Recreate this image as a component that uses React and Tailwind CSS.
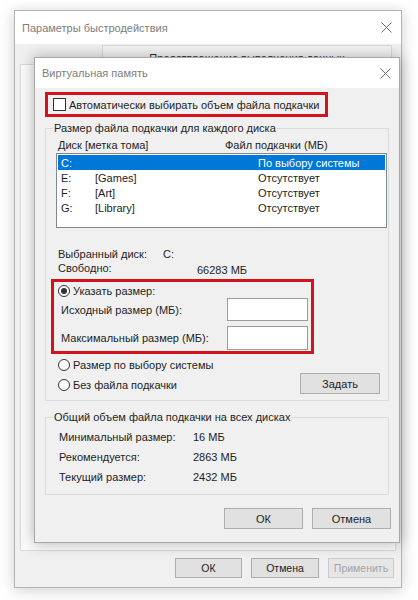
import React from 'react';

const CloseX = () => (
  <svg width="11" height="11" viewBox="0 0 11 11" className="shrink-0">
    <path d="M0.5 0.5 L10.5 10.5 M10.5 0.5 L0.5 10.5" stroke="#6e6e6e" strokeWidth="1" fill="none" />
  </svg>
)

const Btn = ({ children, className = '', disabled = false }) => (
  <div className={`flex items-center justify-center whitespace-nowrap border border-[#adadad] bg-[#e1e1e1] ${disabled ? 'text-[#a3a3a3] border-[#cccccc] bg-[#e6e6e6]' : 'text-[#1e1e1e]'} ${className}`}>
    {children}
  </div>
)

const Radio = ({ checked }) => (
  <div className="w-[12px] h-[12px] rounded-full border border-[#333333] bg-white flex items-center justify-center shrink-0">
    {checked ? <div className="w-[6px] h-[6px] rounded-full bg-[#333333]" /> : null}
  </div>
)

const drives = [
  { d: 'C:', label: '', size: 'По выбору системы', sel: true },
  { d: 'E:', label: '[Games]', size: 'Отсутствует' },
  { d: 'F:', label: '[Art]', size: 'Отсутствует' },
  { d: 'G:', label: '[Library]', size: 'Отсутствует' },
]

const totals = [
  ['Минимальный размер:', '16 МБ'],
  ['Рекомендуется:', '2863 МБ'],
  ['Текущий размер:', '2432 МБ'],
]

export default function App() {
  return (
    <div className="relative w-[418px] h-[600px] bg-white overflow-hidden font-['Liberation_Sans',Arial,sans-serif] text-[11px] leading-[16px] text-[#1e1e1e] whitespace-nowrap">

      {/* окно "Параметры быстродействия" */}
      <div className="absolute left-[14px] top-[10px] w-[388px] h-[578px] border border-[#b4b4b4] bg-[#f0f0f0] shadow-[0_2px_14px_rgba(0,0,0,0.2)] flex flex-col">
        <div className="h-[33px] bg-white flex items-center justify-between pl-[7px] pr-[9px] shrink-0">
          <span className="text-[11px] text-[#7d7d7d]">Параметры быстродействия</span>
          <CloseX />
        </div>
        <div className="flex flex-col px-[5px]">
          <div className="h-[19px] mt-[1px] flex">
            <div className="ml-[82px] w-[290px] border-t border-l border-r border-[#d9d9d9] bg-[#f4f4f4] flex justify-center pt-[4px]">
              <span className="text-[#333333]">Предотвращение выполнения данных</span>
            </div>
          </div>
          <div className="h-[487px] border border-[#d9d9d9] bg-[#fbfbfb]" />
          <div className="mt-[7px] flex justify-end gap-[9px] mr-[2px] text-[10.5px]">
            <Btn className="w-[67px] h-[20px]">ОК</Btn>
            <Btn className="w-[68px] h-[20px]">Отмена</Btn>
            <Btn className="w-[66px] h-[20px]" disabled>Применить</Btn>
          </div>
        </div>
      </div>

      {/* окно "Виртуальная память" */}
      <div className="absolute left-[34px] top-[57px] w-[366px] h-[486px] border border-[#a8a8a8] bg-[#f0f0f0] shadow-[0_0_14px_rgba(0,0,0,0.3)] flex flex-col">
        <div className="h-[30px] bg-white flex items-center justify-between pl-[7px] pr-[8px] shrink-0">
          <span className="text-[11px] text-[#7d7d7d]">Виртуальная память</span>
          <CloseX />
        </div>

        <div className="flex flex-col px-[10px]">
          <div className="mt-[4px] h-[25px] w-[283px] border-[3px] border-[#d2131d] flex items-center pl-[5px] gap-[3px]">
            <div className="w-[13px] h-[13px] border border-[#333333] bg-white shrink-0" />
            <span>Автоматически выбирать объем файла подкачки</span>
          </div>

          <fieldset className="mt-[3px] border border-[#dcdcdc] pl-[5px] pb-[5px]">
            <legend className="ml-[2px] px-[1px] leading-[16px]">Размер файла подкачки для каждого диска</legend>
            <div className="flex h-[16px] mt-[1px] items-center">
              <span className="ml-[7px] w-[167px] shrink-0">Диск [метка тома]</span>
              <span>Файл подкачки (МБ)</span>
            </div>
            <div className="ml-[5px] w-[331px] h-[75px] border border-[#828790] bg-white p-[1px] flex flex-col">
              {drives.map((r) => (
                <div key={r.d} className={`h-[15px] flex items-center pl-[3px] ${r.sel ? 'bg-[#0078d7] text-white' : ''}`}>
                  <span className="w-[34px] shrink-0">{r.d}</span>
                  <span className="w-[163px] shrink-0">{r.label}</span>
                  <span>{r.size}</span>
                </div>
              ))}
            </div>
            <div className="mt-[19px] flex h-[14px] items-center">
              <span className="ml-[7px] w-[105px] shrink-0">Выбранный диск:</span>
              <span>C:</span>
            </div>
            <div className="flex h-[14px] items-center">
              <span className="ml-[7px] w-[139px] shrink-0">Свободно:</span>
              <span className="mt-[3px]">66283 МБ</span>
            </div>

            <div className="mt-[4px] w-[263px] h-[75px] border-[3px] border-[#d2131d] flex flex-col pt-[1px]">
              <div className="h-[15px] flex items-center pl-[4px] gap-[3px]">
                <Radio checked />
                <span>Указать размер:</span>
              </div>
              <div className="h-[23px] flex items-center justify-between pl-[7px] pr-[3px]">
                <span>Исходный размер (МБ):</span>
                <div className="w-[81px] h-[23px] border border-[#9c9c9c] bg-white shrink-0" />
              </div>
              <div className="mt-[5px] h-[24px] flex items-center justify-between pl-[7px] pr-[3px]">
                <span>Максимальный размер (МБ):</span>
                <div className="w-[81px] h-[24px] border border-[#9c9c9c] bg-white shrink-0" />
              </div>
            </div>

            <div className="mt-[1px] flex justify-between items-end">
              <div className="flex flex-col">
                <div className="h-[20px] flex items-center pl-[7px] gap-[3px]">
                  <Radio />
                  <span>Размер по выбору системы</span>
                </div>
                <div className="h-[20px] flex items-center pl-[7px] gap-[3px]">
                  <Radio />
                  <span>Без файла подкачки</span>
                </div>
              </div>
              <Btn className="w-[80px] h-[21px] mb-[1px] mr-[8px]">Задать</Btn>
            </div>
          </fieldset>

          <fieldset className="mt-[8px] border border-[#dcdcdc] pl-[5px] pb-[7px]">
            <legend className="ml-[2px] px-[1px] leading-[16px]">Общий объем файла подкачки на всех дисках</legend>
            <div className="mt-[2px] flex flex-col">
              {totals.map(([k, v]) => (
                <div key={k} className="h-[20px] flex items-center">
                  <span className="ml-[8px] w-[134px] shrink-0">{k}</span>
                  <span>{v}</span>
                </div>
              ))}
            </div>
          </fieldset>

          <div className="mt-[13px] flex justify-end gap-[9px] mr-[-2px]">
            <Btn className="w-[79px] h-[21px]">ОК</Btn>
            <Btn className="w-[79px] h-[21px]">Отмена</Btn>
          </div>
        </div>
      </div>
    </div>
  )
}
